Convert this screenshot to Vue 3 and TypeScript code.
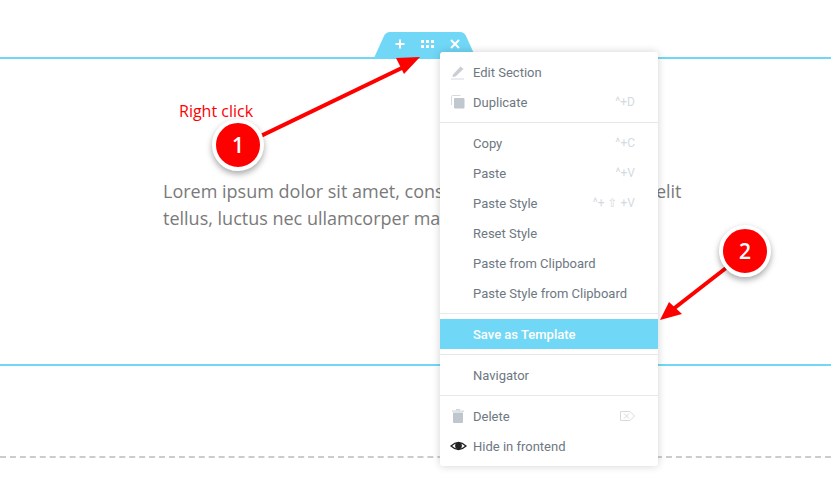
<template>
  <div class="page">
    <section class="section">
      <p class="section__text">
        Lorem ipsum dolor sit amet, consectetur adipiscing elit. Ut elit tellus, luctus nec ullamcorper mattis, pulvinar dapibus leo.
      </p>
    </section>
    <div class="dropzone"></div>

    <div class="handle">
      <svg class="handle__shape" width="104" height="27" viewBox="0 0 104 27">
        <path d="M1 27 L11 5 Q13 1 17 1 L87 1 Q91 1 93 5 L103 27 Z" fill="#71d7f7" />
      </svg>
      <svg class="handle__icons" width="72" height="14" viewBox="0 0 72 14">
        <path d="M7 2.5v9M2.5 7h9" stroke="#fff" stroke-width="2" fill="none" />
        <g fill="#fff">
          <rect x="28" y="3" width="3" height="3" /><rect x="33" y="3" width="3" height="3" /><rect x="38" y="3" width="3" height="3" />
          <rect x="28" y="8" width="3" height="3" /><rect x="33" y="8" width="3" height="3" /><rect x="38" y="8" width="3" height="3" />
        </g>
        <path d="M58 3l8 8M66 3l-8 8" stroke="#fff" stroke-width="2" fill="none" />
      </svg>
    </div>

    <span class="note">Right click</span>

    <svg class="arrows" width="831" height="487" viewBox="0 0 831 487">
      <path d="M240 146 L408 65" stroke="#f00" stroke-width="4" fill="none" />
      <path d="M420 57 L396 58 L404 74 Z" fill="#f00" />
      <path d="M726 268 L672 310" stroke="#f00" stroke-width="4" fill="none" />
      <path d="M660 320 L682 314 L669 302 Z" fill="#f00" />
    </svg>
    <div class="badge badge--one">1</div>
    <div class="badge badge--two">2</div>

    <div class="menu">
      <div v-for="(group, g) in groups" :key="g" class="menu__group">
        <div
          v-for="item in group"
          :key="item.label"
          class="menu__item"
          :class="{ 'menu__item--active': item.active }"
        >
          <span class="menu__icon">
            <svg v-if="item.icon === 'edit'" width="16" height="16" viewBox="0 0 16 16">
              <path d="M3 10.5 L10.5 2.5 L13.5 5 L5.5 12.5 L2.5 13 Z" fill="#c8ced4" />
              <path d="M1 15h13" stroke="#d5dadf" stroke-width="1" />
            </svg>
            <svg v-else-if="item.icon === 'copy'" width="16" height="16" viewBox="0 0 16 16">
              <path d="M1.5 11V2.5q0-1 1-1h8" stroke="#d5dadf" stroke-width="1" fill="none" />
              <rect x="4" y="4" width="10.5" height="10.5" rx="1" fill="#c0c7ce" />
            </svg>
            <svg v-else-if="item.icon === 'trash'" width="16" height="16" viewBox="0 0 16 16">
              <path d="M2 2.5h12v1.2H2z" fill="#d0d5da" />
              <path d="M6 1h4v1.5H6z" fill="#d0d5da" />
              <path d="M3 4.5h10V14q0 1-1 1H4q-1 0-1-1z" fill="#bfc6cd" />
            </svg>
            <svg v-else-if="item.icon === 'eye'" width="17" height="16" viewBox="0 0 17 16">
              <path d="M1 8 Q8.5 1 16 8 Q8.5 15 1 8 Z" fill="none" stroke="#222" stroke-width="1.3" />
              <circle cx="8.5" cy="7.8" r="3.4" fill="#222" />
            </svg>
          </span>
          <span class="menu__label">{{ item.label }}</span>
          <span v-if="item.hint" class="menu__hint">{{ item.hint }}</span>
          <span v-if="item.shift" class="menu__hint">^+ <span class="menu__shift">⇧</span> +V</span>
          <svg v-if="item.erase" class="menu__erase" width="15" height="10" viewBox="0 0 15 10">
            <path d="M.5.5h9.5l4.5 4.5-4.5 4.5H.5z" fill="none" stroke="#d5dadf" />
            <path d="M4 2.5l5 5M9 2.5l-5 5" stroke="#d5dadf" fill="none" />
          </svg>
        </div>
      </div>
    </div>
  </div>
</template>

<script setup lang="ts">
interface MenuItem {
  label: string
  icon?: 'edit' | 'copy' | 'trash' | 'eye'
  hint?: string
  shift?: boolean
  erase?: boolean
  active?: boolean
}

const groups: MenuItem[][] = [
  [
    { label: 'Edit Section', icon: 'edit' },
    { label: 'Duplicate', icon: 'copy', hint: '^+D' }
  ],
  [
    { label: 'Copy', hint: '^+C' },
    { label: 'Paste', hint: '^+V' },
    { label: 'Paste Style', shift: true },
    { label: 'Reset Style' },
    { label: 'Paste from Clipboard' },
    { label: 'Paste Style from Clipboard' }
  ],
  [{ label: 'Save as Template', active: true }],
  [{ label: 'Navigator' }],
  [
    { label: 'Delete', icon: 'trash', erase: true },
    { label: 'Hide in frontend', icon: 'eye' }
  ]
]
</script>

<style>
html,
body {
  background: #fff;
}
</style>

<style scoped>
.page {
  position: relative;
  width: 831px;
  height: 487px;
  overflow: hidden;
  padding-top: 57px;
  box-sizing: border-box;
  background: #fff;
}

.section {
  height: 309px;
  box-sizing: border-box;
  border-top: 2px solid #71d7f7;
  border-bottom: 2px solid #71d7f7;
  padding: 119px 0 0 163px;
}

.section__text {
  width: 520px;
  margin: 0;
  font-family: "Open Sans", sans-serif;
  font-size: 18px;
  line-height: 27px;
  color: #7a7a7a;
}

.dropzone {
  margin-top: 90px;
  border-top: 2px dashed #ccc;
}

.handle {
  position: absolute;
  left: 373px;
  top: 31px;
  width: 104px;
  height: 27px;
}

.handle__shape {
  display: block;
}

.handle__icons {
  position: absolute;
  left: 20px;
  top: 6px;
}

.note {
  position: absolute;
  left: 179px;
  top: 99px;
  font-family: "Open Sans", sans-serif;
  font-size: 16px;
  line-height: 24px;
  color: #f00;
}

.arrows {
  position: absolute;
  left: 0;
  top: 0;
}

.badge {
  position: absolute;
  width: 44px;
  height: 44px;
  box-sizing: content-box;
  border: 4px solid #fff;
  border-radius: 50%;
  background: #f00;
  color: #fff;
  font-family: "Open Sans", sans-serif;
  font-size: 21px;
  font-weight: 600;
  line-height: 44px;
  text-align: center;
  box-shadow: 0 3px 6px rgba(0, 0, 0, 0.35);
}

.badge--one {
  left: 212px;
  top: 119px;
}

.badge--two {
  left: 719px;
  top: 225px;
}

.menu {
  position: absolute;
  left: 440px;
  top: 52px;
  width: 218px;
  background: #fff;
  border-radius: 3px;
  box-shadow: 0 0 8px rgba(0, 0, 0, 0.18);
  font-family: Roboto, sans-serif;
  font-size: 13px;
  color: #6d7882;
}

.menu__group {
  padding: 5px 0;
  border-bottom: 1px solid #e6e9ec;
}

.menu__group:first-child {
  padding-bottom: 5px;
}

.menu__group:last-child {
  border-bottom: none;
}

.menu__item {
  display: flex;
  align-items: center;
  height: 30px;
  padding: 0 23px 0 10px;
}

.menu__item--active {
  background: #71d7f7;
  color: #fff;
  font-weight: 500;
}

.menu__icon {
  display: flex;
  align-items: center;
  width: 23px;
  flex: none;
}

.menu__label {
  flex: 1;
}

.menu__hint {
  font-size: 12px;
  color: #d5dadf;
}

.menu__shift {
  font-family: "DejaVu Sans", sans-serif;
}
</style>
